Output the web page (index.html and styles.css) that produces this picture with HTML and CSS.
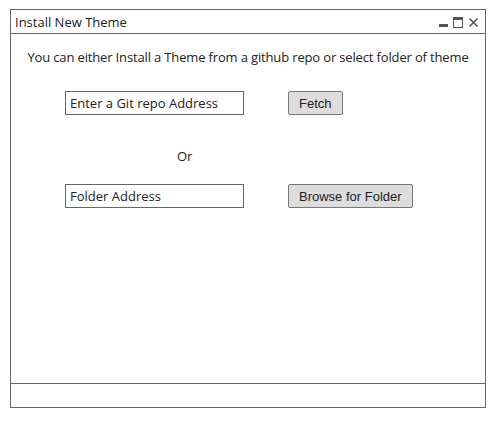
FILE: index.html
```html
<!DOCTYPE html>
<html>
<head>
<meta charset="utf-8">
<link rel="stylesheet" href="styles.css">
</head>
<body>
<div class="window">
  <div class="titlebar">
    <span class="title">Install New Theme</span>
    <span class="controls">
      <svg width="40" height="11" viewBox="0 0 40 11">
        <rect x="0" y="7" width="9" height="3" fill="#555"/>
        <rect x="14.5" y="0.5" width="9" height="10" fill="none" stroke="#555" stroke-width="1"/>
        <rect x="14" y="0" width="10" height="3" fill="#555"/>
        <path d="M30.5 1.5 L38.5 9.5 M38.5 1.5 L30.5 9.5" stroke="#555" stroke-width="1.6" fill="none"/>
      </svg>
    </span>
  </div>
  <div class="content">
    <p class="intro">You can either Install a Theme from a github repo or select folder of theme</p>
    <div class="row">
      <div class="field">Enter a Git repo Address</div>
      <div class="btn">Fetch</div>
    </div>
    <div class="or">Or</div>
    <div class="row">
      <div class="field">Folder Address</div>
      <div class="btn">Browse for Folder</div>
    </div>
  </div>
  <div class="footer"></div>
</div>
</body>
</html>
```
FILE: styles.css
```css
html, body {
  margin: 0;
  padding: 0;
  background: #fff;
}
body {
  font-family: "Open Sans", "Liberation Sans", sans-serif;
  color: #222;
}
.window {
  box-sizing: border-box;
  margin: 9px 0 0 10px;
  width: 476px;
  height: 399px;
  border: 1px solid #666;
  display: flex;
  flex-direction: column;
}
.titlebar {
  box-sizing: border-box;
  height: 24px;
  border-bottom: 1px solid #666;
  display: flex;
  align-items: center;
  justify-content: space-between;
  padding: 0 6px 0 4px;
}
.title {
  font-size: 13px;
  line-height: 22px;
}
.controls {
  display: flex;
  align-items: center;
  padding-top: 2px;
}
.controls svg {
  display: block;
}
.content {
  flex: 1;
  display: flex;
  flex-direction: column;
}
.intro {
  margin: 14px 0 0 0;
  text-align: center;
  font-size: 13px;
  line-height: 18px;
  letter-spacing: -0.15px;
}
.row {
  display: flex;
  align-items: center;
  margin-left: 54px;
}
.intro + .row {
  margin-top: 25px;
}
.field {
  box-sizing: border-box;
  width: 179px;
  height: 24px;
  border: 1px solid #666;
  font-size: 13px;
  line-height: 22px;
  padding-left: 4px;
  margin-right: 44px;
}
.btn {
  box-sizing: border-box;
  height: 24px;
  border: 1px solid #777;
  border-radius: 2px;
  background: #ddd;
  font-family: "Liberation Sans", Arial, sans-serif;
  font-size: 13px;
  line-height: 23px;
  padding: 0 10px;
}
.or {
  margin: 32px 0 0 166px;
  font-size: 13px;
  line-height: 18px;
}
.or + .row {
  margin-top: 19px;
}
.footer {
  box-sizing: border-box;
  height: 24px;
  border-top: 1px solid #666;
}
```
